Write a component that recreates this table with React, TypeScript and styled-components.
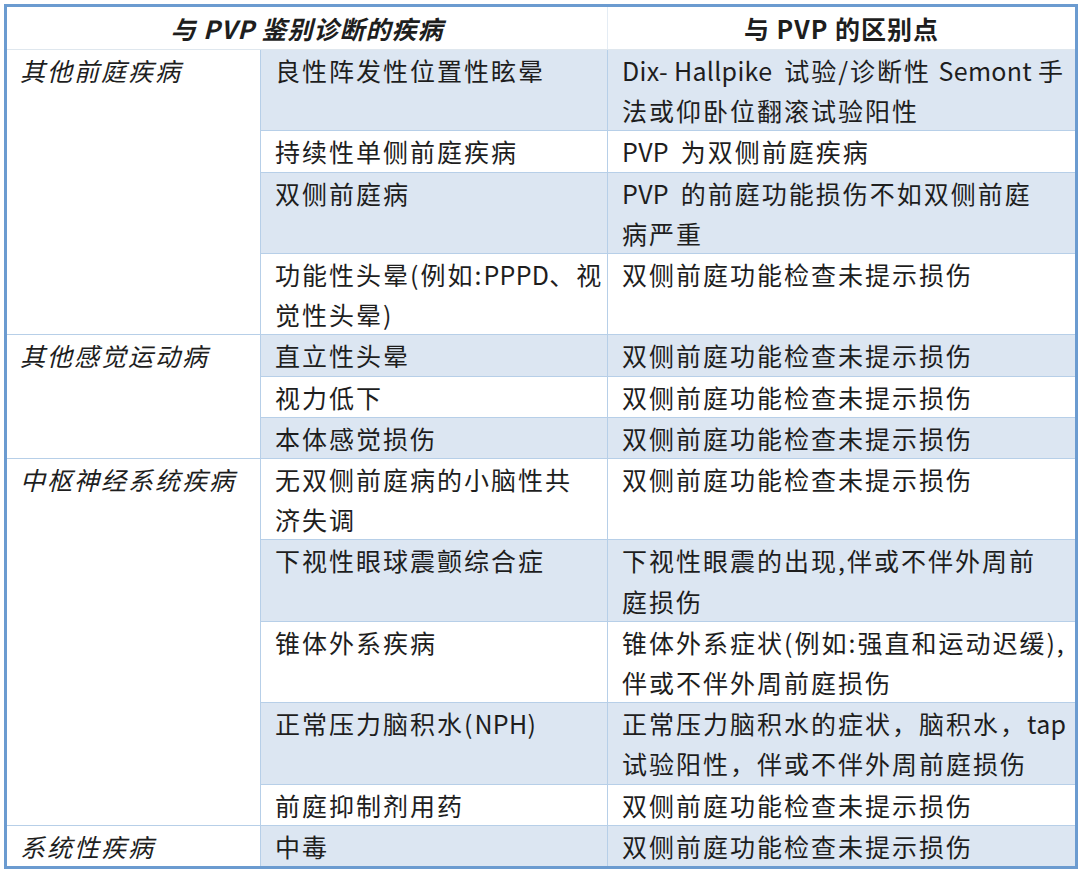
import React from "react";
import styled, { createGlobalStyle } from "styled-components";

const Global = createGlobalStyle`
  html, body { margin: 0; padding: 0; background: #ffffff; }
  body { font-family: "Noto Sans CJK SC", "Noto Sans", sans-serif; color: #1e1e1e; }
`;

const Page = styled.div`
  padding: 4px 5px 4px 4px;
`;

const Table = styled.table`
  width: 1071px;
  table-layout: fixed;
  border-collapse: collapse;
  border: 3px solid #6b9bd0;
`;

const HeadCell = styled.th<{ $italic?: boolean }>`
  height: 42px;
  padding: 0;
  font-size: 25px;
  font-weight: 700;
  font-style: ${(p) => (p.$italic ? "italic" : "normal")};
  letter-spacing: 1px;
  line-height: 42px;
  text-align: center;
  background: #ffffff;
  border-bottom: 1px solid #dfe7ee;
  border-right: 1px solid #e4ecf4;
  white-space: nowrap;
`;

const GroupCell = styled.td`
  padding: 0 0 0 13px;
  font-size: 25px;
  font-style: italic;
  letter-spacing: 2px;
  line-height: 40.2px;
  vertical-align: top;
  background: #ffffff;
  border: 1px solid #b7cfe8;
  white-space: nowrap;
`;

const Cell = styled.td<{ $shaded: boolean; $pad: number }>`
  padding: 0 0 0 ${(p) => p.$pad}px;
  font-size: 25px;
  letter-spacing: 2px;
  line-height: 40.2px;
  vertical-align: top;
  background: ${(p) => (p.$shaded ? "#dce6f2" : "#ffffff")};
  border: 1px solid #b7cfe8;
  white-space: nowrap;
  overflow: hidden;
`;

const Latin = styled.span`
  letter-spacing: 0.3px;
`;

type Row = { name: string[]; diff: string[] };
type Group = { title: string; rows: Row[] };

const groups: Group[] = [
  {
    title: "其他前庭疾病",
    rows: [
      { name: ["良性阵发性位置性眩晕"], diff: ["Dix- Hallpike\u00a0 试验/诊断性 Semont 手", "法或仰卧位翻滚试验阳性"] },
      { name: ["持续性单侧前庭疾病"], diff: ["PVP\u00a0 为双侧前庭疾病"] },
      { name: ["双侧前庭病"], diff: ["PVP\u00a0 的前庭功能损伤不如双侧前庭", "病严重"] },
      { name: ["功能性头晕(例如:PPPD、视", "觉性头晕)"], diff: ["双侧前庭功能检查未提示损伤"] },
    ],
  },
  {
    title: "其他感觉运动病",
    rows: [
      { name: ["直立性头晕"], diff: ["双侧前庭功能检查未提示损伤"] },
      { name: ["视力低下"], diff: ["双侧前庭功能检查未提示损伤"] },
      { name: ["本体感觉损伤"], diff: ["双侧前庭功能检查未提示损伤"] },
    ],
  },
  {
    title: "中枢神经系统疾病",
    rows: [
      { name: ["无双侧前庭病的小脑性共", "济失调"], diff: ["双侧前庭功能检查未提示损伤"] },
      { name: ["下视性眼球震颤综合症"], diff: ["下视性眼震的出现,伴或不伴外周前", "庭损伤"] },
      { name: ["锥体外系疾病"], diff: ["锥体外系症状(例如:强直和运动迟缓),", "伴或不伴外周前庭损伤"] },
      { name: ["正常压力脑积水(NPH)"], diff: ["正常压力脑积水的症状，脑积水，tap", "试验阳性，伴或不伴外周前庭损伤"] },
      { name: ["前庭抑制剂用药"], diff: ["双侧前庭功能检查未提示损伤"] },
    ],
  },
  {
    title: "系统性疾病",
    rows: [{ name: ["中毒"], diff: ["双侧前庭功能检查未提示损伤"] }],
  },
];

const Text = ({ text }: { text: string }) => {
  const parts = text.split(/([A-Za-z][A-Za-z\-\u00a0 ]*)/).filter((s) => s.length > 0);
  return (
    <>
      {parts.map((p, i) => (/^[A-Za-z]/.test(p) ? <Latin key={i}>{p}</Latin> : <React.Fragment key={i}>{p}</React.Fragment>))}
    </>
  );
};

const Lines = ({ lines }: { lines: string[] }) => (
  <>
    {lines.map((l, i) => (
      <React.Fragment key={i}>
        {i > 0 && <br />}
        <Text text={l} />
      </React.Fragment>
    ))}
  </>
);

export default function App() {
  let idx = 0;
  return (
    <Page>
      <Global />
      <Table>
        <colgroup>
          <col style={{ width: 255 }} />
          <col style={{ width: 347 }} />
          <col style={{ width: 469 }} />
        </colgroup>
        <thead>
          <tr>
            <HeadCell colSpan={2} $italic>
              与 PVP 鉴别诊断的疾病
            </HeadCell>
            <HeadCell>与 PVP 的区别点</HeadCell>
          </tr>
        </thead>
        <tbody>
          {groups.map((g) =>
            g.rows.map((r, i) => {
              const shaded = idx % 2 === 0;
              idx++;
              return (
                <tr key={g.title + i}>
                  {i === 0 && <GroupCell rowSpan={g.rows.length}>{g.title}</GroupCell>}
                  <Cell $shaded={shaded} $pad={14}>
                    <Lines lines={r.name} />
                  </Cell>
                  <Cell $shaded={shaded} $pad={14}>
                    <Lines lines={r.diff} />
                  </Cell>
                </tr>
              );
            })
          )}
        </tbody>
      </Table>
    </Page>
  );
}
